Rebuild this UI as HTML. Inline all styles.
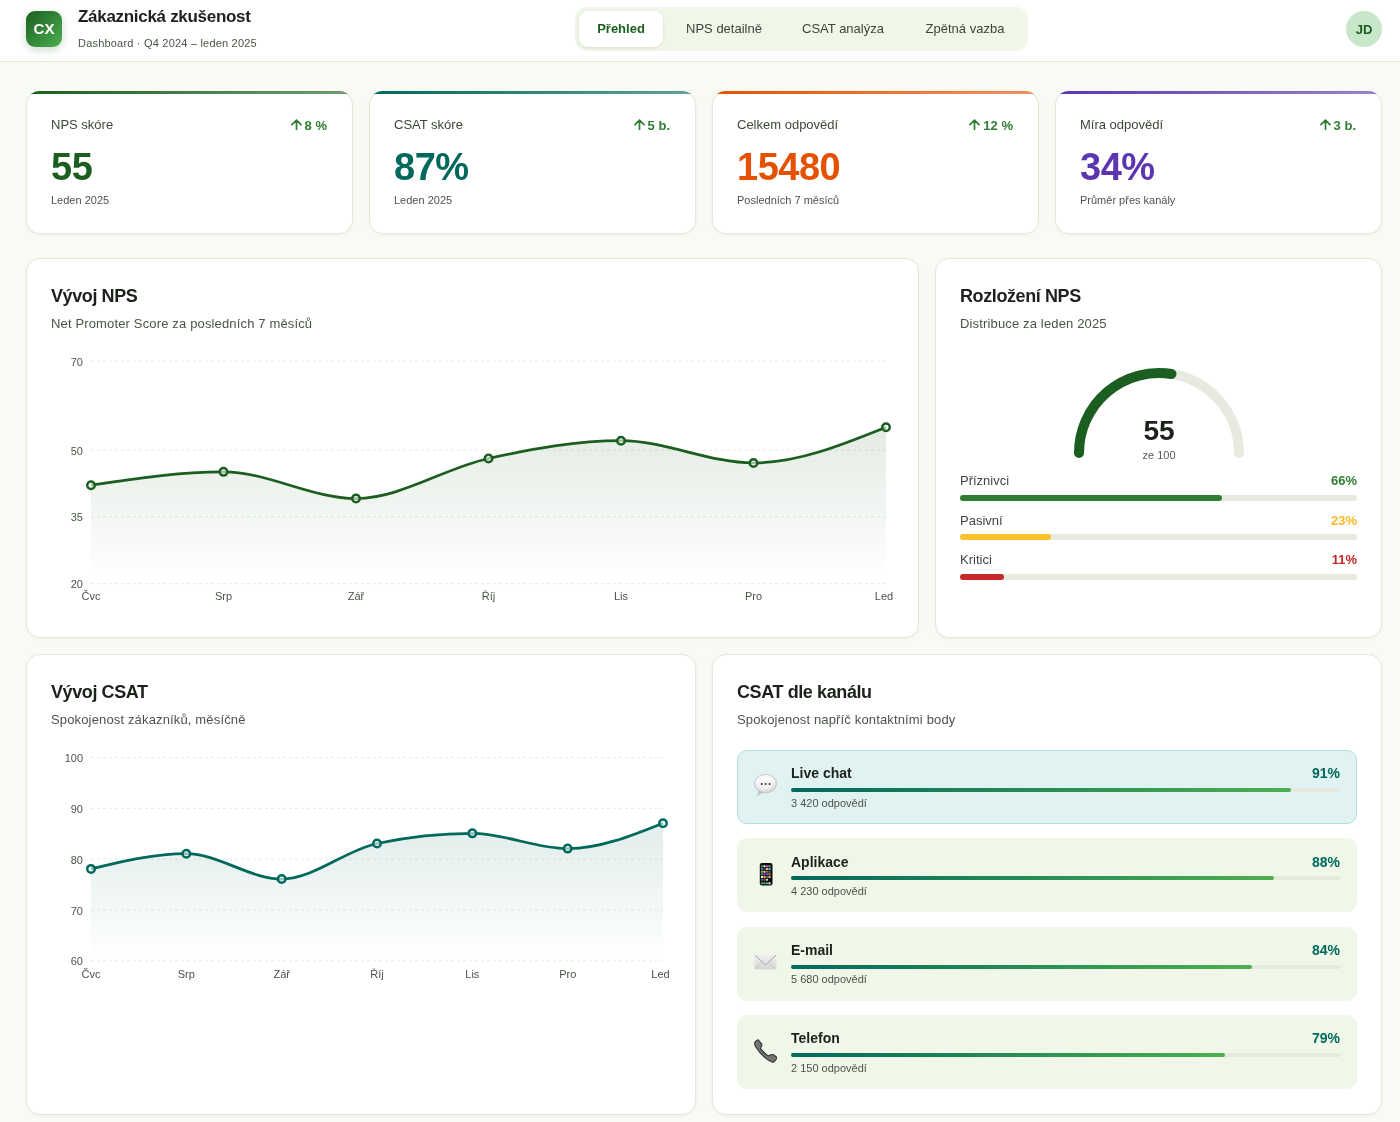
<!DOCTYPE html>
<html lang="cs"><head><meta charset="utf-8"><title>Zákaznická zkušenost</title>
<style>
*{margin:0;padding:0;box-sizing:border-box}
html,body{width:1400px;height:1122px;overflow:hidden}
body{background:#f8fbf4;font-family:"Liberation Sans", sans-serif;position:relative}
.t{position:absolute;line-height:1;white-space:nowrap;will-change:transform}
.abs{position:absolute}
.hdr{position:absolute;left:0;top:0;width:1400px;height:62px;background:#fff;border-bottom:1px solid #e3e8da}
.logo{position:absolute;left:26px;top:11px;width:36px;height:36px;border-radius:9px;background:linear-gradient(135deg,#1b5e20,#4caf50);box-shadow:0 3px 8px rgba(27,94,32,.22)}
.nav{position:absolute;left:575px;top:7px;width:453px;height:44px;border-radius:12px;background:#f0f6e8}
.tab{position:absolute;left:579px;top:11px;width:84px;height:36px;border-radius:9px;background:#fff;box-shadow:0 1px 3px rgba(60,80,40,.12)}
.av{position:absolute;left:1346px;top:11px;width:36px;height:36px;border-radius:50%;background:#c8e6c9}
.card{position:absolute;background:#fff;border:1px solid #e3e8da;border-radius:14px;box-shadow:0 1px 3px rgba(60,80,40,.06)}
.kcard{position:absolute;background:#fff;border-radius:14px;box-shadow:inset 0 0 0 1px #e3e8da,0 1px 3px rgba(60,80,40,.06);overflow:hidden}
.bar3{position:absolute;left:0;top:0;right:0;height:3px}
.item{position:absolute;left:737px;width:620px;height:74px;border-radius:10px;background:#f0f6e8;border:1px solid #f0f6e8}
.item.hl{background:#e0f2f1;border-color:#b2dfdb}
</style></head><body>
<div class="hdr"></div>
<div class="logo"></div>
<div class="t" style="left:-256px;width:600px;text-align:center;top:21.30px;font-size:15px;font-weight:700;color:#fff;">CX</div>
<div class="t" style="left:78px;top:7.61px;font-size:17px;font-weight:700;color:#1c211b;letter-spacing:-0.3px;">Zákaznická zkušenost</div>
<div class="t" style="left:78px;top:37.69px;font-size:11px;font-weight:400;color:#4b5449;letter-spacing:0.2px;">Dashboard · Q4 2024 – leden 2025</div>
<div class="nav"></div><div class="tab"></div>
<div class="t" style="left:320.5px;width:600px;text-align:center;top:22.00px;font-size:13px;font-weight:700;color:#1b5e20;">Přehled</div>
<div class="t" style="left:423.5px;width:600px;text-align:center;top:22.00px;font-size:13px;font-weight:400;color:#3b4539;">NPS detailně</div>
<div class="t" style="left:543px;width:600px;text-align:center;top:22.00px;font-size:13px;font-weight:400;color:#3b4539;">CSAT analýza</div>
<div class="t" style="left:665px;width:600px;text-align:center;top:22.00px;font-size:13px;font-weight:400;color:#3b4539;">Zpětná vazba</div>
<div class="av"></div>
<div class="t" style="left:1064px;width:600px;text-align:center;top:23.00px;font-size:13px;font-weight:700;color:#1b5e20;">JD</div>
<div class="kcard" style="left:26px;top:91px;width:327px;height:143px"><div class="bar3" style="background:linear-gradient(90deg,#1b5e20,rgba(27,94,32,.6))"></div></div>
<div class="t" style="left:51px;top:118.00px;font-size:13px;font-weight:400;color:#3d463b;">NPS skóre</div>
<div class="t" style="left:-273px;width:600px;text-align:right;top:119.00px;font-size:13px;font-weight:700;color:#2e7d32;"><svg width="11" height="11" viewBox="0 0 11 11" style="vertical-align:0px;margin-right:3px"><path d="M5.5 10.3V1.4M1 5.7L5.5 1.2L10 5.7" fill="none" stroke="#2e7d32" stroke-width="1.7" stroke-linecap="round" stroke-linejoin="round"/></svg>8 %</div>
<div class="t" style="left:51px;top:148.33px;font-size:38px;font-weight:700;color:#1b5e20;letter-spacing:-0.5px;">55</div>
<div class="t" style="left:51px;top:194.69px;font-size:11px;font-weight:400;color:#4b5449;">Leden 2025</div>
<div class="kcard" style="left:369px;top:91px;width:327px;height:143px"><div class="bar3" style="background:linear-gradient(90deg,#00695c,rgba(0,105,92,.6))"></div></div>
<div class="t" style="left:394px;top:118.00px;font-size:13px;font-weight:400;color:#3d463b;">CSAT skóre</div>
<div class="t" style="left:70px;width:600px;text-align:right;top:119.00px;font-size:13px;font-weight:700;color:#2e7d32;"><svg width="11" height="11" viewBox="0 0 11 11" style="vertical-align:0px;margin-right:3px"><path d="M5.5 10.3V1.4M1 5.7L5.5 1.2L10 5.7" fill="none" stroke="#2e7d32" stroke-width="1.7" stroke-linecap="round" stroke-linejoin="round"/></svg>5 b.</div>
<div class="t" style="left:394px;top:148.33px;font-size:38px;font-weight:700;color:#00695c;letter-spacing:-0.5px;">87%</div>
<div class="t" style="left:394px;top:194.69px;font-size:11px;font-weight:400;color:#4b5449;">Leden 2025</div>
<div class="kcard" style="left:712px;top:91px;width:327px;height:143px"><div class="bar3" style="background:linear-gradient(90deg,#e65100,rgba(230,81,0,.6))"></div></div>
<div class="t" style="left:737px;top:118.00px;font-size:13px;font-weight:400;color:#3d463b;">Celkem odpovědí</div>
<div class="t" style="left:413px;width:600px;text-align:right;top:119.00px;font-size:13px;font-weight:700;color:#2e7d32;"><svg width="11" height="11" viewBox="0 0 11 11" style="vertical-align:0px;margin-right:3px"><path d="M5.5 10.3V1.4M1 5.7L5.5 1.2L10 5.7" fill="none" stroke="#2e7d32" stroke-width="1.7" stroke-linecap="round" stroke-linejoin="round"/></svg>12 %</div>
<div class="t" style="left:737px;top:148.33px;font-size:38px;font-weight:700;color:#e65100;letter-spacing:-0.5px;">15480</div>
<div class="t" style="left:737px;top:194.69px;font-size:11px;font-weight:400;color:#4b5449;">Posledních 7 měsíců</div>
<div class="kcard" style="left:1055px;top:91px;width:327px;height:143px"><div class="bar3" style="background:linear-gradient(90deg,#5e35b1,rgba(94,53,177,.6))"></div></div>
<div class="t" style="left:1080px;top:118.00px;font-size:13px;font-weight:400;color:#3d463b;">Míra odpovědí</div>
<div class="t" style="left:756px;width:600px;text-align:right;top:119.00px;font-size:13px;font-weight:700;color:#2e7d32;"><svg width="11" height="11" viewBox="0 0 11 11" style="vertical-align:0px;margin-right:3px"><path d="M5.5 10.3V1.4M1 5.7L5.5 1.2L10 5.7" fill="none" stroke="#2e7d32" stroke-width="1.7" stroke-linecap="round" stroke-linejoin="round"/></svg>3 b.</div>
<div class="t" style="left:1080px;top:148.33px;font-size:38px;font-weight:700;color:#5e35b1;letter-spacing:-0.5px;">34%</div>
<div class="t" style="left:1080px;top:194.69px;font-size:11px;font-weight:400;color:#4b5449;">Průměr přes kanály</div>
<div class="card" style="left:26px;top:258px;width:893px;height:380px"></div>
<div class="card" style="left:935px;top:258px;width:447px;height:380px"></div>
<div class="t" style="left:51px;top:286.76px;font-size:18px;font-weight:700;color:#1c211b;letter-spacing:-0.4px;">Vývoj NPS</div>
<div class="t" style="left:51px;top:317.00px;font-size:13px;font-weight:400;color:#4b5449;letter-spacing:0.15px;">Net Promoter Score za posledních 7 měsíců</div>
<div class="t" style="left:960px;top:286.76px;font-size:18px;font-weight:700;color:#1c211b;letter-spacing:-0.4px;">Rozložení NPS</div>
<div class="t" style="left:960px;top:317.00px;font-size:13px;font-weight:400;color:#4b5449;letter-spacing:0.15px;">Distribuce za leden 2025</div>
<div class="t" style="left:960px;top:474.30px;font-size:13px;font-weight:400;color:#3d463b;">Příznivci</div>
<div class="t" style="left:757px;width:600px;text-align:right;top:474.30px;font-size:13px;font-weight:700;color:#2e7d32;">66%</div>
<div class="abs" style="left:960px;top:495px;width:397px;height:6px;border-radius:3px;background:#e6eadf"></div>
<div class="abs" style="left:960px;top:495px;width:262.0px;height:6px;border-radius:3px;background:#2e7d32"></div>
<div class="t" style="left:960px;top:514.00px;font-size:13px;font-weight:400;color:#3d463b;">Pasivní</div>
<div class="t" style="left:757px;width:600px;text-align:right;top:514.00px;font-size:13px;font-weight:700;color:#f9b825;">23%</div>
<div class="abs" style="left:960px;top:534px;width:397px;height:6px;border-radius:3px;background:#e6eadf"></div>
<div class="abs" style="left:960px;top:534px;width:91.3px;height:6px;border-radius:3px;background:#fbc02d"></div>
<div class="t" style="left:960px;top:553.00px;font-size:13px;font-weight:400;color:#3d463b;">Kritici</div>
<div class="t" style="left:757px;width:600px;text-align:right;top:553.00px;font-size:13px;font-weight:700;color:#c62828;">11%</div>
<div class="abs" style="left:960px;top:574px;width:397px;height:6px;border-radius:3px;background:#e6eadf"></div>
<div class="abs" style="left:960px;top:574px;width:43.7px;height:6px;border-radius:3px;background:#c62828"></div>
<div class="card" style="left:26px;top:654px;width:670px;height:461px"></div>
<div class="card" style="left:712px;top:654px;width:670px;height:461px"></div>
<div class="t" style="left:51px;top:682.76px;font-size:18px;font-weight:700;color:#1c211b;letter-spacing:-0.4px;">Vývoj CSAT</div>
<div class="t" style="left:51px;top:713.30px;font-size:13px;font-weight:400;color:#4b5449;letter-spacing:0.15px;">Spokojenost zákazníků, měsíčně</div>
<div class="t" style="left:737px;top:682.76px;font-size:18px;font-weight:700;color:#1c211b;letter-spacing:-0.4px;">CSAT dle kanálu</div>
<div class="t" style="left:737px;top:713.30px;font-size:13px;font-weight:400;color:#4b5449;letter-spacing:0.15px;">Spokojenost napříč kontaktními body</div>
<div class="item hl" style="top:750.0px"></div>
<div class="abs" style="left:753px;top:773.0px;width:24px;height:26px;display:flex;align-items:center;justify-content:center"><svg width="24" height="24" viewBox="0 0 24 24"><defs><radialGradient id="bub" cx="45%" cy="30%" r="75%"><stop offset="0" stop-color="#ffffff"/><stop offset=".6" stop-color="#f1f1f1"/><stop offset="1" stop-color="#c9c9c9"/></radialGradient></defs><path d="M6.5 15.5 L3.4 22.6 L11.5 18 Z" fill="#c4c4c4"/><ellipse cx="12.6" cy="9.6" rx="11" ry="9.3" fill="url(#bub)" stroke="#b9b9b9" stroke-width=".7"/><circle cx="8.7" cy="10.1" r="1" fill="#333"/><circle cx="12.6" cy="10.1" r="1" fill="#333"/><circle cx="16.5" cy="10.1" r="1" fill="#333"/></svg></div>
<div class="t" style="left:791px;top:766.35px;font-size:14px;font-weight:700;color:#1c211b;">Live chat</div>
<div class="t" style="left:740px;width:600px;text-align:right;top:766.35px;font-size:14px;font-weight:700;color:#00695c;">91%</div>
<div class="abs" style="left:791px;top:788.0px;width:549px;height:4px;border-radius:2px;background:#e5e9de"></div>
<div class="abs" style="left:791px;top:788.0px;width:499.6px;height:4px;border-radius:2px;background:linear-gradient(90deg,#00695c,#4caf50)"></div>
<div class="t" style="left:791px;top:797.79px;font-size:11px;font-weight:400;color:#4b5449;">3 420 odpovědí</div>
<div class="item" style="top:838.3px"></div>
<div class="abs" style="left:753px;top:861.3px;width:24px;height:26px;display:flex;align-items:center;justify-content:center"><svg width="24" height="26" viewBox="0 0 24 26"><rect x="6.8" y="2.1" width="12.7" height="22.3" rx="2.2" fill="#0d0d0d"/><rect x="7.95" y="4.25" width="2.1" height="2.1" rx=".4" fill="#43a047"/><rect x="10.45" y="4.25" width="2.1" height="2.1" rx=".4" fill="#eeeeee"/><rect x="12.95" y="4.25" width="2.1" height="2.1" rx=".4" fill="#ab6fd6"/><rect x="15.45" y="4.25" width="2.1" height="2.1" rx=".4" fill="#9e9e9e"/><rect x="7.95" y="6.95" width="2.1" height="2.1" rx=".4" fill="#1e88e5"/><rect x="10.45" y="6.95" width="2.1" height="2.1" rx=".4" fill="#444444"/><rect x="12.95" y="6.95" width="2.1" height="2.1" rx=".4" fill="#e0c090"/><rect x="15.45" y="6.95" width="2.1" height="2.1" rx=".4" fill="#4dd0e1"/><rect x="7.95" y="9.649999999999999" width="2.1" height="2.1" rx=".4" fill="#d4a020"/><rect x="10.45" y="9.649999999999999" width="2.1" height="2.1" rx=".4" fill="#dddddd"/><rect x="12.95" y="9.649999999999999" width="2.1" height="2.1" rx=".4" fill="#d84030"/><rect x="15.45" y="9.649999999999999" width="2.1" height="2.1" rx=".4" fill="#5a6a80"/><rect x="7.95" y="12.25" width="2.1" height="2.1" rx=".4" fill="#26a69a"/><rect x="10.45" y="12.25" width="2.1" height="2.1" rx=".4" fill="#d030c0"/><rect x="12.95" y="12.25" width="2.1" height="2.1" rx=".4" fill="#1a8ad0"/><rect x="15.45" y="12.25" width="2.1" height="2.1" rx=".4" fill="#ff8c00"/><rect x="7.95" y="14.95" width="2.1" height="2.1" rx=".4" fill="#eeeeee"/><rect x="10.45" y="14.95" width="2.1" height="2.1" rx=".4" fill="#f0d030"/><rect x="12.95" y="14.95" width="2.1" height="2.1" rx=".4" fill="#555555"/><rect x="15.45" y="14.95" width="2.1" height="2.1" rx=".4" fill="#cccccc"/><rect x="7.95" y="17.65" width="2.1" height="2.1" rx=".4" fill="#1e7ac0"/><rect x="10.45" y="17.65" width="2.1" height="2.1" rx=".4" fill="#d04040"/><rect x="12.95" y="17.65" width="2.1" height="2.1" rx=".4" fill="#d0d0d0"/><rect x="7.95" y="21.25" width="2.1" height="2.1" rx=".4" fill="#4caf50"/><rect x="10.45" y="21.25" width="2.1" height="2.1" rx=".4" fill="#29b6f6"/><rect x="12.95" y="21.25" width="2.1" height="2.1" rx=".4" fill="#4caf50"/><rect x="15.45" y="21.25" width="2.1" height="2.1" rx=".4" fill="#f5f5f5"/></svg></div>
<div class="t" style="left:791px;top:854.65px;font-size:14px;font-weight:700;color:#1c211b;">Aplikace</div>
<div class="t" style="left:740px;width:600px;text-align:right;top:854.65px;font-size:14px;font-weight:700;color:#00695c;">88%</div>
<div class="abs" style="left:791px;top:876.3px;width:549px;height:4px;border-radius:2px;background:#e5e9de"></div>
<div class="abs" style="left:791px;top:876.3px;width:483.1px;height:4px;border-radius:2px;background:linear-gradient(90deg,#00695c,#4caf50)"></div>
<div class="t" style="left:791px;top:886.09px;font-size:11px;font-weight:400;color:#4b5449;">4 230 odpovědí</div>
<div class="item" style="top:926.6px"></div>
<div class="abs" style="left:753px;top:949.6px;width:24px;height:26px;display:flex;align-items:center;justify-content:center"><svg width="24" height="24" viewBox="0 0 24 24"><defs><linearGradient id="env" x1="0" y1="0" x2="0" y2="1"><stop offset="0" stop-color="#f0f0f0"/><stop offset="1" stop-color="#d6d6d6"/></linearGradient></defs><rect x="1.5" y="3.7" width="22" height="14.8" rx="1.2" fill="url(#env)"/><path d="M2.2 18.1 L9 10.8 M22.8 18.1 L16 10.8" fill="none" stroke="#c4c4c4" stroke-width=".8"/><path d="M2 4.1 L12.5 14 L23 4.1" fill="none" stroke="#a0a5aa" stroke-width="1" stroke-linejoin="round"/></svg></div>
<div class="t" style="left:791px;top:942.95px;font-size:14px;font-weight:700;color:#1c211b;">E-mail</div>
<div class="t" style="left:740px;width:600px;text-align:right;top:942.95px;font-size:14px;font-weight:700;color:#00695c;">84%</div>
<div class="abs" style="left:791px;top:964.6px;width:549px;height:4px;border-radius:2px;background:#e5e9de"></div>
<div class="abs" style="left:791px;top:964.6px;width:461.2px;height:4px;border-radius:2px;background:linear-gradient(90deg,#00695c,#4caf50)"></div>
<div class="t" style="left:791px;top:974.39px;font-size:11px;font-weight:400;color:#4b5449;">5 680 odpovědí</div>
<div class="item" style="top:1014.9px"></div>
<div class="abs" style="left:753px;top:1037.9px;width:24px;height:26px;display:flex;align-items:center;justify-content:center"><svg width="24" height="24" viewBox="0 0 24 24"><path d="M5.2 0.9 L8.6 4.8 Q9.2 5.8 8.5 6.8 L7.4 9.4 Q10.5 13.5 15.2 16.9 L17.8 15.8 Q19.6 15.1 20.8 15.9 L23.4 18 Q24.2 19 23.5 20 L21.2 22.6 Q20.3 23.4 19 23 Q9.8 19 2.6 7.8 Q1.2 5.2 1.8 3.4 Q3.2 1.5 4.6 0.9 Z" fill="#747474" stroke="#2f3133" stroke-width="1.1" stroke-linejoin="round"/></svg></div>
<div class="t" style="left:791px;top:1031.25px;font-size:14px;font-weight:700;color:#1c211b;">Telefon</div>
<div class="t" style="left:740px;width:600px;text-align:right;top:1031.25px;font-size:14px;font-weight:700;color:#00695c;">79%</div>
<div class="abs" style="left:791px;top:1052.9px;width:549px;height:4px;border-radius:2px;background:#e5e9de"></div>
<div class="abs" style="left:791px;top:1052.9px;width:433.7px;height:4px;border-radius:2px;background:linear-gradient(90deg,#00695c,#4caf50)"></div>
<div class="t" style="left:791px;top:1062.69px;font-size:11px;font-weight:400;color:#4b5449;">2 150 odpovědí</div>
<svg class="abs" style="left:0;top:0" width="1400" height="1122" viewBox="0 0 1400 1122">
<defs><linearGradient id="ga" x1="0" y1="0" x2="0" y2="1"><stop offset="0" stop-color="#1b5e20" stop-opacity=".12"/><stop offset="1" stop-color="#1b5e20" stop-opacity="0"/></linearGradient><linearGradient id="gb" x1="0" y1="0" x2="0" y2="1"><stop offset="0" stop-color="#00695c" stop-opacity=".12"/><stop offset="1" stop-color="#00695c" stop-opacity="0"/></linearGradient></defs>
<line x1="91" y1="361.0" x2="886" y2="361.0" stroke="#e9ece2" stroke-width="1" stroke-dasharray="3 3"/>
<text x="83" y="365.5" text-anchor="end" font-size="11" fill="#4b5449" font-family="Liberation Sans, sans-serif">70</text>
<line x1="91" y1="450.1" x2="886" y2="450.1" stroke="#e9ece2" stroke-width="1" stroke-dasharray="3 3"/>
<text x="83" y="454.6" text-anchor="end" font-size="11" fill="#4b5449" font-family="Liberation Sans, sans-serif">50</text>
<line x1="91" y1="516.9" x2="886" y2="516.9" stroke="#e9ece2" stroke-width="1" stroke-dasharray="3 3"/>
<text x="83" y="521.4" text-anchor="end" font-size="11" fill="#4b5449" font-family="Liberation Sans, sans-serif">35</text>
<line x1="91" y1="583.7" x2="886" y2="583.7" stroke="#e9ece2" stroke-width="1" stroke-dasharray="3 3"/>
<text x="83" y="588.2" text-anchor="end" font-size="11" fill="#4b5449" font-family="Liberation Sans, sans-serif">20</text>
<path d="M91.00,485.21 C135.17,478.53 179.33,471.85 223.50,471.85 C267.67,471.85 311.83,498.57 356.00,498.57 C400.17,498.57 444.33,468.14 488.50,458.49 C532.67,448.84 576.83,440.67 621.00,440.67 C665.17,440.67 709.33,462.94 753.50,462.94 C797.67,462.94 841.83,445.13 886.00,427.31 L886,583.2 L91,583.2 Z" fill="url(#ga)"/>
<path d="M91.00,485.21 C135.17,478.53 179.33,471.85 223.50,471.85 C267.67,471.85 311.83,498.57 356.00,498.57 C400.17,498.57 444.33,468.14 488.50,458.49 C532.67,448.84 576.83,440.67 621.00,440.67 C665.17,440.67 709.33,462.94 753.50,462.94 C797.67,462.94 841.83,445.13 886.00,427.31" fill="none" stroke="#1b5e20" stroke-width="2.75"/>
<circle cx="91.00" cy="485.21" r="3.75" fill="#fff" fill-opacity=".6" stroke="#1b5e20" stroke-width="2.5"/>
<circle cx="223.50" cy="471.85" r="3.75" fill="#fff" fill-opacity=".6" stroke="#1b5e20" stroke-width="2.5"/>
<circle cx="356.00" cy="498.57" r="3.75" fill="#fff" fill-opacity=".6" stroke="#1b5e20" stroke-width="2.5"/>
<circle cx="488.50" cy="458.49" r="3.75" fill="#fff" fill-opacity=".6" stroke="#1b5e20" stroke-width="2.5"/>
<circle cx="621.00" cy="440.67" r="3.75" fill="#fff" fill-opacity=".6" stroke="#1b5e20" stroke-width="2.5"/>
<circle cx="753.50" cy="462.94" r="3.75" fill="#fff" fill-opacity=".6" stroke="#1b5e20" stroke-width="2.5"/>
<circle cx="886.00" cy="427.31" r="3.75" fill="#fff" fill-opacity=".6" stroke="#1b5e20" stroke-width="2.5"/>
<text x="91.0" y="600" text-anchor="middle" font-size="11" fill="#4b5449" font-family="Liberation Sans, sans-serif">Čvc</text>
<text x="223.5" y="600" text-anchor="middle" font-size="11" fill="#4b5449" font-family="Liberation Sans, sans-serif">Srp</text>
<text x="356.0" y="600" text-anchor="middle" font-size="11" fill="#4b5449" font-family="Liberation Sans, sans-serif">Zář</text>
<text x="488.5" y="600" text-anchor="middle" font-size="11" fill="#4b5449" font-family="Liberation Sans, sans-serif">Říj</text>
<text x="621.0" y="600" text-anchor="middle" font-size="11" fill="#4b5449" font-family="Liberation Sans, sans-serif">Lis</text>
<text x="753.5" y="600" text-anchor="middle" font-size="11" fill="#4b5449" font-family="Liberation Sans, sans-serif">Pro</text>
<text x="884.0" y="600" text-anchor="middle" font-size="11" fill="#4b5449" font-family="Liberation Sans, sans-serif">Led</text>
<line x1="91" y1="757.6" x2="663" y2="757.6" stroke="#e9ece2" stroke-width="1" stroke-dasharray="3 3"/>
<text x="83" y="762.1" text-anchor="end" font-size="11" fill="#4b5449" font-family="Liberation Sans, sans-serif">100</text>
<line x1="91" y1="808.4" x2="663" y2="808.4" stroke="#e9ece2" stroke-width="1" stroke-dasharray="3 3"/>
<text x="83" y="812.9" text-anchor="end" font-size="11" fill="#4b5449" font-family="Liberation Sans, sans-serif">90</text>
<line x1="91" y1="859.2" x2="663" y2="859.2" stroke="#e9ece2" stroke-width="1" stroke-dasharray="3 3"/>
<text x="83" y="863.8" text-anchor="end" font-size="11" fill="#4b5449" font-family="Liberation Sans, sans-serif">80</text>
<line x1="91" y1="910.1" x2="663" y2="910.1" stroke="#e9ece2" stroke-width="1" stroke-dasharray="3 3"/>
<text x="83" y="914.6" text-anchor="end" font-size="11" fill="#4b5449" font-family="Liberation Sans, sans-serif">70</text>
<line x1="91" y1="960.9" x2="663" y2="960.9" stroke="#e9ece2" stroke-width="1" stroke-dasharray="3 3"/>
<text x="83" y="965.4" text-anchor="end" font-size="11" fill="#4b5449" font-family="Liberation Sans, sans-serif">60</text>
<path d="M91.00,868.91 C122.78,861.29 154.56,853.67 186.33,853.67 C218.11,853.67 249.89,879.08 281.67,879.08 C313.44,879.08 345.22,850.28 377.00,843.50 C408.78,836.73 440.56,833.34 472.33,833.34 C504.11,833.34 535.89,848.59 567.67,848.59 C599.44,848.59 631.22,835.88 663.00,823.17 L663,960.4 L91,960.4 Z" fill="url(#gb)"/>
<path d="M91.00,868.91 C122.78,861.29 154.56,853.67 186.33,853.67 C218.11,853.67 249.89,879.08 281.67,879.08 C313.44,879.08 345.22,850.28 377.00,843.50 C408.78,836.73 440.56,833.34 472.33,833.34 C504.11,833.34 535.89,848.59 567.67,848.59 C599.44,848.59 631.22,835.88 663.00,823.17" fill="none" stroke="#00695c" stroke-width="2.75"/>
<circle cx="91.00" cy="868.91" r="3.75" fill="#fff" fill-opacity=".6" stroke="#00695c" stroke-width="2.5"/>
<circle cx="186.33" cy="853.67" r="3.75" fill="#fff" fill-opacity=".6" stroke="#00695c" stroke-width="2.5"/>
<circle cx="281.67" cy="879.08" r="3.75" fill="#fff" fill-opacity=".6" stroke="#00695c" stroke-width="2.5"/>
<circle cx="377.00" cy="843.50" r="3.75" fill="#fff" fill-opacity=".6" stroke="#00695c" stroke-width="2.5"/>
<circle cx="472.33" cy="833.34" r="3.75" fill="#fff" fill-opacity=".6" stroke="#00695c" stroke-width="2.5"/>
<circle cx="567.67" cy="848.59" r="3.75" fill="#fff" fill-opacity=".6" stroke="#00695c" stroke-width="2.5"/>
<circle cx="663.00" cy="823.17" r="3.75" fill="#fff" fill-opacity=".6" stroke="#00695c" stroke-width="2.5"/>
<text x="91.0" y="977.7" text-anchor="middle" font-size="11" fill="#4b5449" font-family="Liberation Sans, sans-serif">Čvc</text>
<text x="186.3" y="977.7" text-anchor="middle" font-size="11" fill="#4b5449" font-family="Liberation Sans, sans-serif">Srp</text>
<text x="281.7" y="977.7" text-anchor="middle" font-size="11" fill="#4b5449" font-family="Liberation Sans, sans-serif">Zář</text>
<text x="377.0" y="977.7" text-anchor="middle" font-size="11" fill="#4b5449" font-family="Liberation Sans, sans-serif">Říj</text>
<text x="472.3" y="977.7" text-anchor="middle" font-size="11" fill="#4b5449" font-family="Liberation Sans, sans-serif">Lis</text>
<text x="567.7" y="977.7" text-anchor="middle" font-size="11" fill="#4b5449" font-family="Liberation Sans, sans-serif">Pro</text>
<text x="660.5" y="977.7" text-anchor="middle" font-size="11" fill="#4b5449" font-family="Liberation Sans, sans-serif">Led</text>
<path d="M1079,453 A80,80 0 0 1 1239,453" fill="none" stroke="#e6eadf" stroke-width="10" stroke-linecap="round"/>
<path d="M1079,453 A80,80 0 0 1 1171.51,373.98" fill="none" stroke="#1b5e20" stroke-width="10" stroke-linecap="round"/>
</svg>
<div class="t" style="left:859px;width:600px;text-align:center;top:417.00px;font-size:28px;font-weight:700;color:#1c211b;">55</div>
<div class="t" style="left:859px;width:600px;text-align:center;top:450.19px;font-size:11px;font-weight:400;color:#545c51;">ze 100</div>
</body></html>
